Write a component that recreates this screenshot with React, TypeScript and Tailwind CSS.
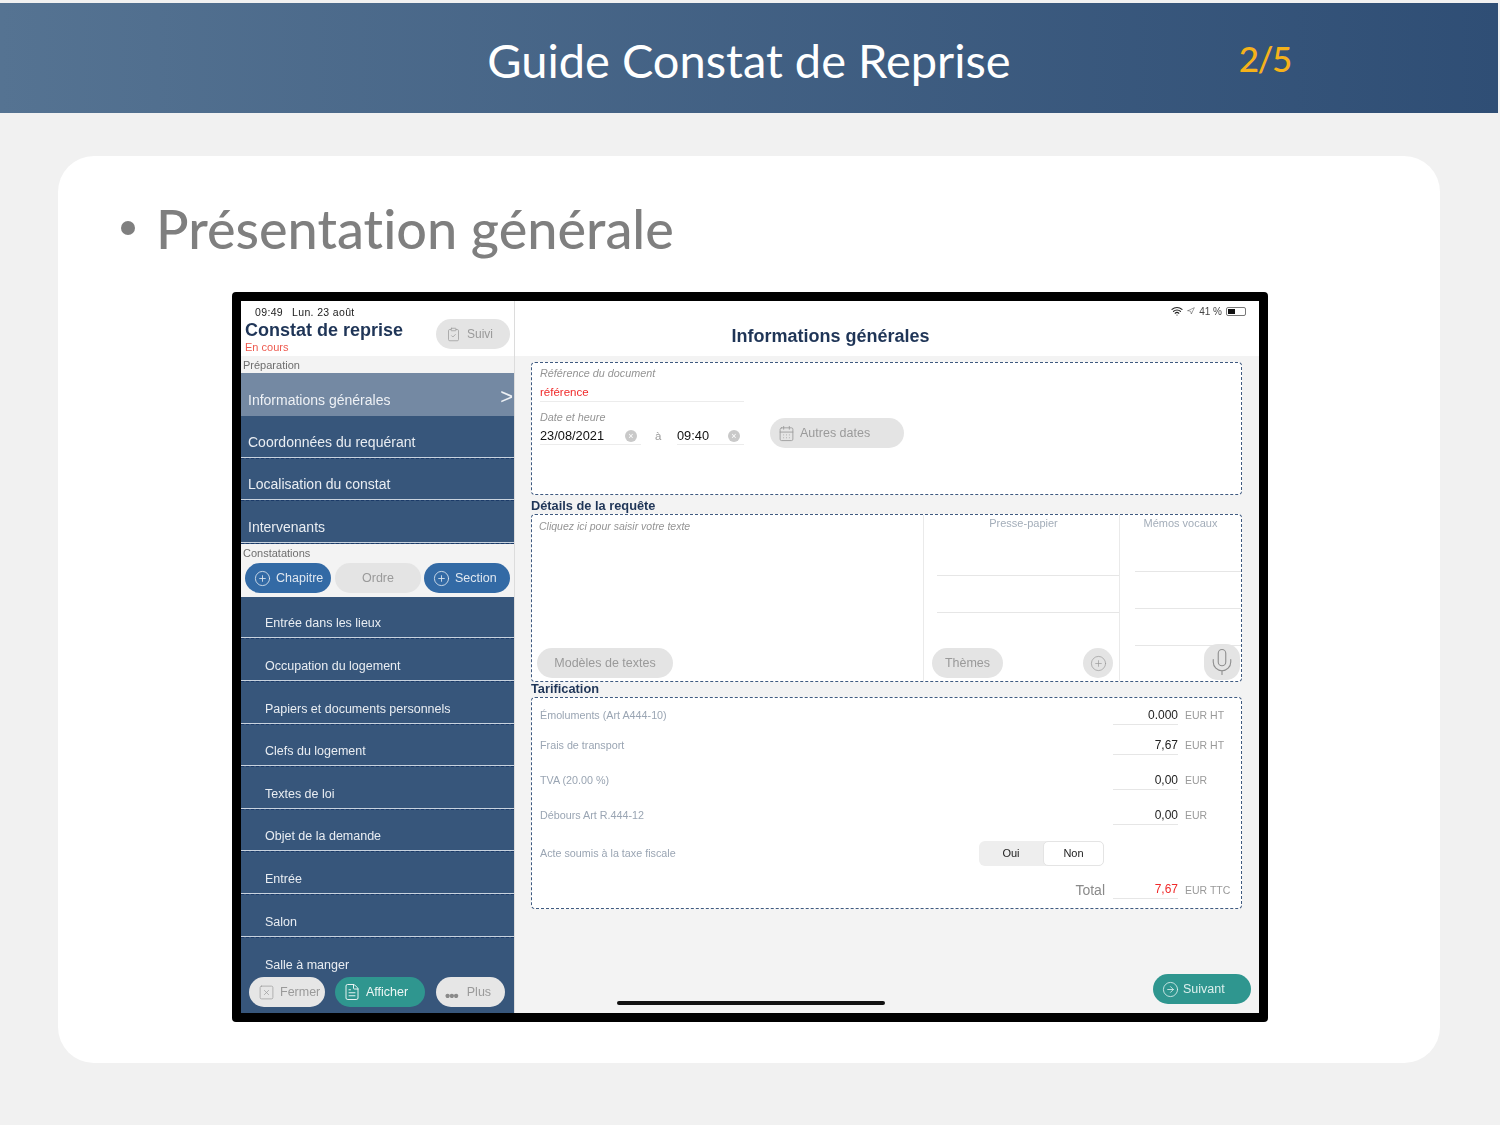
import React from 'react';
import {
  CalendarDays,
  CircleArrowRight,
  CirclePlus,
  ClipboardCheck,
  FileText,
  Mic,
  Navigation,
  SquareX,
  Wifi,
} from 'lucide-react';

const prepItems = ['Coordonnées du requérant', 'Localisation du constat', 'Intervenants'];
const subItems = [
  'Entrée dans les lieux',
  'Occupation du logement',
  'Papiers et documents personnels',
  'Clefs du logement',
  'Textes de loi',
  'Objet de la demande',
  'Entrée',
  'Salon',
  'Salle à manger',
];

const tarifRows = [
  { label: 'Émoluments (Art A444-10)', value: '0.000', unit: 'EUR HT', h: 'h-[26px]' },
  { label: 'Frais de transport', value: '7,67', unit: 'EUR HT', h: 'h-[30px]' },
  { label: 'TVA (20.00 %)', value: '0,00', unit: 'EUR', h: 'h-[35px]' },
  { label: 'Débours Art R.444-12', value: '0,00', unit: 'EUR', h: 'h-[35px]' },
];

const ClearDot = () => (
  <span className="flex h-[12px] w-[12px] items-center justify-center rounded-full bg-[#c9c9c9] text-[9px] leading-none text-white">
    ×
  </span>
);

const Sidebar = () => (
  <div className="relative flex h-full w-[274px] shrink-0 flex-col overflow-hidden border-r border-[#dcdcdc]">
    <div className="flex h-[18px] items-end pl-[14px] text-[10.5px] leading-[14px] tracking-[0.35px] text-[#222]">
      <span>09:49</span>
      <span className="ml-[9px]">Lun. 23 août</span>
    </div>
    <div className="flex h-[37px] pl-[4px] pr-[4px]">
      <div className="flex-1">
        <div className="text-[18px] leading-[22px] font-bold text-[#1f3557]">Constat de reprise</div>
        <div className="text-[11px] leading-[12px] text-[#ee5a4f]">En cours</div>
      </div>
      <div className="flex h-[30px] w-[74px] items-center gap-[6px] rounded-full bg-[#e4e4e4] pl-[10px] text-[12px] text-[#9a9a9a]">
        <ClipboardCheck size={15} strokeWidth={1.2} />
        Suivi
      </div>
    </div>
    <div className="h-[17px] bg-[#f3f3f3] pl-[2px] text-[11px] leading-[18px] text-[#6e6e6e]">Préparation</div>
    <div className="flex h-[43px] items-end justify-between bg-[#7489a3] pb-[7px] pl-[7px] text-[14px] leading-[18px] text-[#eef1f5]">
      Informations générales
      <span className="pr-[1px] text-[22px] leading-[24px] font-light">&gt;</span>
    </div>
    {prepItems.map((item) => (
      <div
        key={item}
        className="flex h-[42.6px] items-end border-b border-dashed border-[#1b3a68] bg-[#37567b] pb-[7px] pl-[7px] text-[14px] leading-[18px] text-[#e9edf2] shadow-[inset_0_-1px_0_#c9d3df]"
      >
        {item}
      </div>
    ))}
    <div className="h-[53px] bg-[#f3f3f3]">
      <div className="pl-[2px] text-[11px] leading-[18px] text-[#6e6e6e]">Constatations</div>
      <div className="mt-[1px] flex pl-[4px] text-[12.5px] leading-[18px]">
        <div className="flex h-[30px] w-[86px] items-center gap-[5px] rounded-full bg-[#336aa5] pl-[9px] pt-[1px] text-[#dfe7f0]">
          <CirclePlus size={17} strokeWidth={1.2} />
          Chapitre
        </div>
        <div className="ml-[4px] flex h-[30px] w-[86px] items-center justify-center rounded-full bg-[#e4e4e4] pt-[1px] text-[#9a9a9a]">
          Ordre
        </div>
        <div className="ml-[3px] flex h-[30px] w-[86px] items-center gap-[5px] rounded-full bg-[#336aa5] pl-[9px] pt-[1px] text-[#dfe7f0]">
          <CirclePlus size={17} strokeWidth={1.2} />
          Section
        </div>
      </div>
    </div>
    {subItems.map((item, i) => (
      <div
        key={item}
        className={`flex h-[42.6px] shrink-0 items-end bg-[#37567b] pb-[6px] pl-[24px] text-[12.5px] leading-[18px] text-[#e9edf2] ${
          i < subItems.length - 1 ? 'border-b border-dashed border-[#1b3a68] shadow-[inset_0_-1px_0_#c9d3df]' : ''
        }`}
      >
        {item}
      </div>
    ))}
    <div className="flex-1 bg-[#37567b]" />
    <div className="absolute bottom-[6px] left-[8px] flex text-[12.5px]">
      <div className="flex h-[30px] w-[76px] items-center gap-[5px] rounded-full bg-[#e6e6e6] pl-[9px] text-[#9a9a9a]">
        <SquareX size={17} strokeWidth={1} />
        Fermer
      </div>
      <div className="ml-[10px] flex h-[30px] w-[90px] items-center gap-[5px] rounded-full bg-[#2f968f] pl-[8px] text-[#eef6f5]">
        <FileText size={18} strokeWidth={1.3} />
        Afficher
      </div>
      <div className="ml-[11px] flex h-[30px] w-[69px] items-center gap-[9px] rounded-full bg-[#e6e6e6] pl-[9px] text-[#9a9a9a]">
        <span className="mt-[7px] text-[15px] leading-[10px] font-bold tracking-[-1px] text-[#8a8a8a]">•••</span>
        Plus
      </div>
    </div>
  </div>
);

const Panel = () => (
  <div className="relative flex h-full flex-1 flex-col bg-[#f3f3f3]">
    <div className="h-[55px] bg-white">
      <div className="flex h-[20px] items-center justify-end gap-[4px] pr-[13px] text-[10px] text-[#444]">
        <Wifi size={12} strokeWidth={2.4} className="text-[#222]" />
        <Navigation size={8} strokeWidth={1.5} />
        <span>41 %</span>
        <span className="flex h-[9px] w-[20px] items-center rounded-[2px] border border-[#777] p-[1px]">
          <span className="h-full w-[7px] bg-[#111]" />
        </span>
      </div>
      <div className="pr-[113px] pt-[4px] text-center text-[18px] leading-[22px] font-bold text-[#1f3557]">
        Informations générales
      </div>
    </div>

    <div className="ml-[16px] mr-[17px] mt-[6px]">
      <div className="h-[133px] rounded-[4px] border border-dashed border-[#3f5a80] bg-white pl-[8px]">
        <div className="pt-[3px] text-[10.8px] leading-[14px] text-[#949494] italic">Référence du document</div>
        <div className="mt-[3px] h-[19px] w-[204px] border-b border-[#ececec] text-[11.5px] leading-[18px] text-[#f02a2a]">
          référence
        </div>
        <div className="mt-[8px] text-[10.8px] leading-[14px] text-[#949494] italic">Date et heure</div>
        <div className="mt-[2px] flex items-start">
          <div className="flex h-[19px] w-[101px] items-center justify-between border-b border-[#ececec] pr-[4px] pt-[2px] text-[12.8px] text-[#111]">
            23/08/2021
            <ClearDot />
          </div>
          <div className="w-[36px] pl-[14px] text-[11.5px] leading-[20px] text-[#9a9a9a]">à</div>
          <div className="flex h-[19px] w-[67px] items-center justify-between border-b border-[#ececec] pr-[4px] pt-[2px] text-[12.8px] text-[#111]">
            09:40
            <ClearDot />
          </div>
          <div className="ml-[26px] -mt-[8px] flex h-[30px] w-[134px] items-center gap-[5px] rounded-full bg-[#e4e4e4] pl-[8px] text-[12.5px] text-[#9a9a9a]">
            <CalendarDays size={17} strokeWidth={1.2} />
            Autres dates
          </div>
        </div>
      </div>

      <div className="h-[19px] text-[12.8px] leading-[22px] font-bold text-[#1f3557]">Détails de la requête</div>
      <div className="flex h-[168px] overflow-hidden rounded-[4px] border border-dashed border-[#3f5a80] bg-white">
        <div className="flex w-[392px] flex-col justify-between border-r border-[#eaeaea] pb-[3px] pl-[5px]">
          <div className="pl-[2px] pt-[4px] text-[10.5px] leading-[14px] text-[#949494] italic">
            Cliquez ici pour saisir votre texte
          </div>
          <div className="flex h-[30px] w-[136px] items-center justify-center rounded-full bg-[#e4e4e4] text-[12.5px] text-[#9a9a9a]">
            Modèles de textes
          </div>
        </div>
        <div className="flex w-[196px] flex-col border-r border-[#eaeaea] pl-[8px]">
          <div className="pr-[4px] pt-[1px] text-center text-[11px] leading-[14px] text-[#a3adb9]">Presse-papier</div>
          <div className="ml-[5px] mt-[45px] h-[38px] border-y border-[#e6e6e6]" />
          <div className="mt-auto mb-[3px] flex items-center justify-between pr-[6px]">
            <div className="flex h-[30px] w-[71px] items-center justify-center rounded-full bg-[#e4e4e4] text-[12.5px] text-[#9a9a9a]">
              Thèmes
            </div>
            <div className="flex h-[30px] w-[30px] items-center justify-center rounded-full bg-[#e4e4e4] text-[#9a9a9a]">
              <CirclePlus size={17} strokeWidth={1} />
            </div>
          </div>
        </div>
        <div className="relative flex-1 pl-[15px]">
          <div className="pt-[1px] pr-[15px] text-center text-[11px] leading-[14px] text-[#a3adb9]">Mémos vocaux</div>
          <div className="mt-[41px] h-[38px] border-y border-[#e6e6e6]" />
          <div className="h-[37px] border-b border-[#e6e6e6]" />
          <div className="absolute right-[1px] bottom-[1px] flex h-[36px] w-[36px] items-center justify-center rounded-[14px] bg-[#e4e4e4] text-[#8f8f8f]">
            <Mic size={30} strokeWidth={0.9} />
          </div>
        </div>
      </div>

      <div className="h-[15px] text-[12.8px] leading-[14px] font-bold text-[#1f3557]">Tarification</div>
      <div className="h-[212px] rounded-[4px] border border-dashed border-[#3f5a80] bg-white pl-[8px] pt-[1px]">
        {tarifRows.map((row) => (
          <div key={row.label} className={`flex items-end ${row.h}`}>
            <div className="flex-1 pb-[3px] text-[10.75px] leading-[14px] text-[#9aa5b3]">{row.label}</div>
            <div className="w-[65px] border-b border-[#e6e6e6] pb-[1px] text-right text-[12px] leading-[16px] text-[#222]">
              {row.value}
            </div>
            <div className="w-[63px] pb-[3px] pl-[7px] text-[10.5px] leading-[14px] text-[#9a9a9a]">{row.unit}</div>
          </div>
        ))}
        <div className="mt-[16px] flex items-center">
          <div className="w-[439px] text-[10.75px] text-[#9aa5b3]">Acte soumis à la taxe fiscale</div>
          <div className="flex h-[25px] w-[125px] rounded-[6px] bg-[#eeeeee] text-[11px] text-[#222]">
            <div className="flex w-[64px] items-center justify-center">Oui</div>
            <div className="flex flex-1 items-center justify-center rounded-[5px] border border-[#e4e4e4] bg-white font-medium">
              Non
            </div>
          </div>
        </div>
        <div className="mt-[15px] flex items-end justify-end">
          <div className="pr-[8px] text-[14px] leading-[18px] text-[#8a8a8a]">Total</div>
          <div className="w-[65px] border-b border-[#e6e6e6] pb-[1px] text-right text-[12px] leading-[16px] text-[#f02a2a]">
            7,67
          </div>
          <div className="w-[63px] pb-[2px] pl-[7px] text-[10.5px] leading-[14px] whitespace-nowrap text-[#9a9a9a]">
            EUR TTC
          </div>
        </div>
      </div>
    </div>

    <div className="mr-[8px] mt-[65px] flex justify-end">
      <div className="flex h-[30px] w-[98px] items-center gap-[4px] rounded-full bg-[#2f968f] pl-[9px] pt-[1px] text-[12.5px] text-[#dcefed]">
        <CircleArrowRight size={17} strokeWidth={1.2} />
        Suivant
      </div>
    </div>
    <div className="absolute bottom-[8px] left-[102px] h-[4px] w-[268px] rounded-full bg-[#111]" />
  </div>
);

export default function App() {
  return (
    <div className="h-[1125px] w-[1500px] overflow-hidden bg-[#f1f1f1] pt-[3px] font-['Liberation_Sans',sans-serif]">
      <header className="grid h-[110px] w-[1498px] grid-cols-[1fr_auto_1fr] items-center bg-gradient-to-r from-[#557392] to-[#2f4e75] font-['Lato',sans-serif] [font-variant-ligatures:none]">
        <div />
        <div className="pt-[4px] text-[47px] leading-[56px] text-white">Guide Constat de Reprise</div>
        <div className="pl-[228px] text-[35px] font-medium tracking-[-1.5px] text-[#f5b21a]">2/5</div>
      </header>
      <main className="ml-[58px] mt-[43px] h-[907px] w-[1382px] rounded-[36px] bg-white">
        <div className="flex items-center pl-[63px] pt-[38px] font-['Lato',sans-serif] text-[54px] leading-[70px] font-medium text-[#7f7f7f] [font-variant-ligatures:none]">
          <span className="mb-[2px] mr-[21px] h-[14px] w-[14px] rounded-full bg-[#7f7f7f]" />
          Présentation générale
        </div>
        <div className="ml-[174px] mt-[28px] flex h-[730px] w-[1036px] rounded-[4px] border-[9px] border-black bg-white blur-[0.4px]">
          <Sidebar />
          <Panel />
        </div>
      </main>
    </div>
  );
}
